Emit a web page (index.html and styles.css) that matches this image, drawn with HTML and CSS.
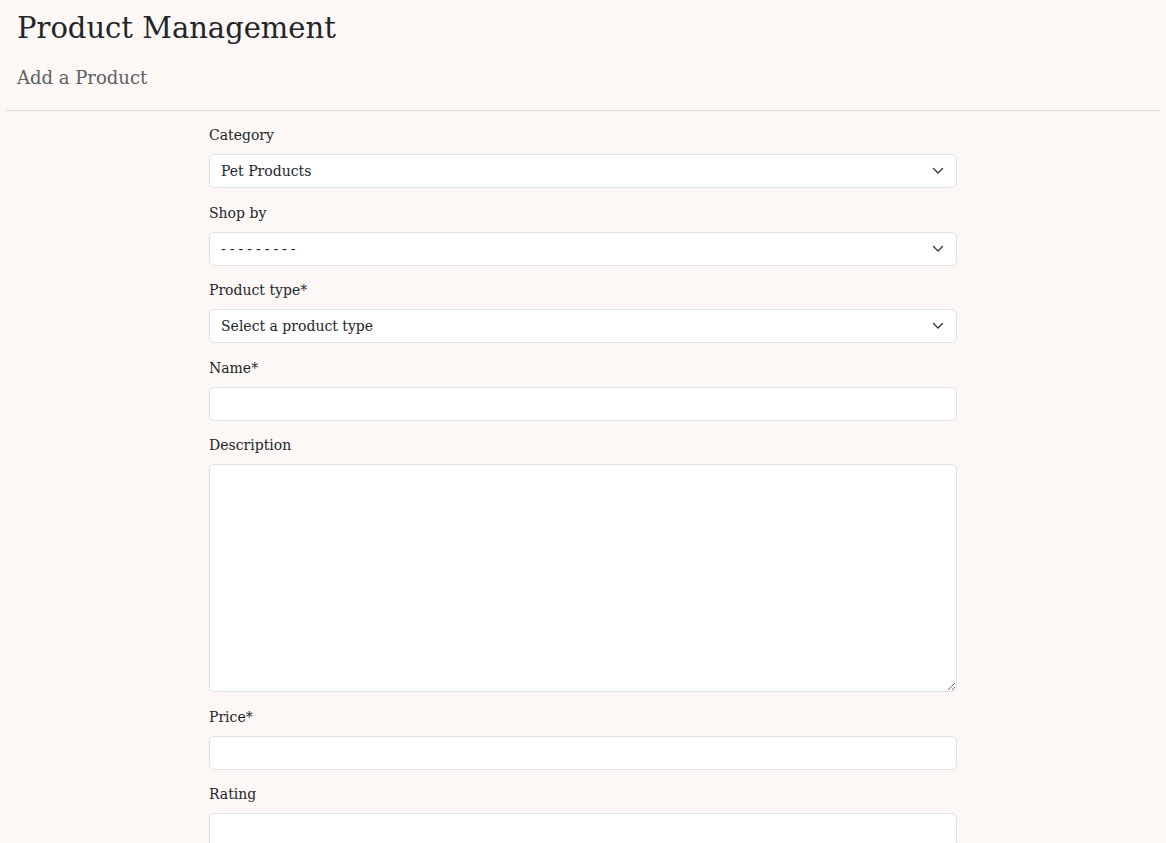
FILE: index.html
```html
<!DOCTYPE html>
<html lang="en">
<head>
<meta charset="utf-8">
<title>Product Management</title>
<link rel="stylesheet" href="styles.css">
</head>
<body>
<header class="page-header">
  <h1 class="title">Product Management</h1>
  <h2 class="subtitle">Add a Product</h2>
</header>
<hr class="divider">
<form class="product-form">
  <div class="field">
    <label class="label" for="category">Category</label>
    <div class="select-wrap">
      <select id="category" class="control select"><option>Pet Products</option></select>
      <svg class="chevron" viewBox="0 0 12 8" width="12" height="8"><path d="M1.5 1.5 6 6l4.5-4.5" fill="none" stroke="#343a40" stroke-width="1.4" stroke-linecap="round" stroke-linejoin="round"/></svg>
    </div>
  </div>
  <div class="field">
    <label class="label" for="shopby">Shop by</label>
    <div class="select-wrap">
      <select id="shopby" class="control select dashes"><option>---------</option></select>
      <svg class="chevron" viewBox="0 0 12 8" width="12" height="8"><path d="M1.5 1.5 6 6l4.5-4.5" fill="none" stroke="#343a40" stroke-width="1.4" stroke-linecap="round" stroke-linejoin="round"/></svg>
    </div>
  </div>
  <div class="field">
    <label class="label" for="ptype">Product type*</label>
    <div class="select-wrap">
      <select id="ptype" class="control select"><option>Select a product type</option></select>
      <svg class="chevron" viewBox="0 0 12 8" width="12" height="8"><path d="M1.5 1.5 6 6l4.5-4.5" fill="none" stroke="#343a40" stroke-width="1.4" stroke-linecap="round" stroke-linejoin="round"/></svg>
    </div>
  </div>
  <div class="field">
    <label class="label" for="name">Name*</label>
    <input id="name" class="control" type="text">
  </div>
  <div class="field">
    <label class="label" for="desc">Description</label>
    <textarea id="desc" class="control textarea"></textarea>
  </div>
  <div class="field">
    <label class="label" for="price">Price*</label>
    <input id="price" class="control" type="text">
  </div>
  <div class="field">
    <label class="label" for="rating">Rating</label>
    <input id="rating" class="control" type="text">
  </div>
</form>
</body>
</html>
```
FILE: styles.css
```css
* { box-sizing: border-box; }
html, body { margin: 0; padding: 0; }
body {
  background: #fdf8f5;
  color: #212529;
  font-family: "DejaVu Serif", "Liberation Serif", serif;
  padding: 0 6px;
}
.page-header { padding: 8px 11px 0; }
.title {
  margin: 0;
  font-size: 29px;
  font-weight: 400;
  line-height: 40px;
  color: #212529;
}
.subtitle {
  margin: 17px 0 0;
  font-size: 18px;
  font-weight: 400;
  line-height: 26px;
  color: #5c5f62;
}
.divider {
  margin: 19px 0 0;
  border: 0;
  border-top: 1px solid #d6dbe0;
}
.product-form {
  width: 748px;
  margin: 11px auto 0;
}
.field { margin-bottom: 11.5px; }
.label {
  display: block;
  font-size: 14px;
  line-height: 24px;
  margin-bottom: 8px;
  position: relative;
  top: 1px;
}
.control {
  display: block;
  width: 100%;
  height: 34px;
  padding: 0 11px;
  font-family: inherit;
  font-size: 14px;
  color: #212529;
  background: #fff;
  border: 1px solid #dee2e6;
  border-radius: 5px;
  outline: none;
}
.select-wrap { position: relative; }
.select {
  appearance: none;
  -webkit-appearance: none;
  padding-right: 36px;
}
.dashes { letter-spacing: 4px; }
.chevron {
  position: absolute;
  right: 13px;
  top: 13px;
  pointer-events: none;
}
.textarea {
  height: 228px;
  padding: 8px 11px;
  resize: vertical;
}
```
